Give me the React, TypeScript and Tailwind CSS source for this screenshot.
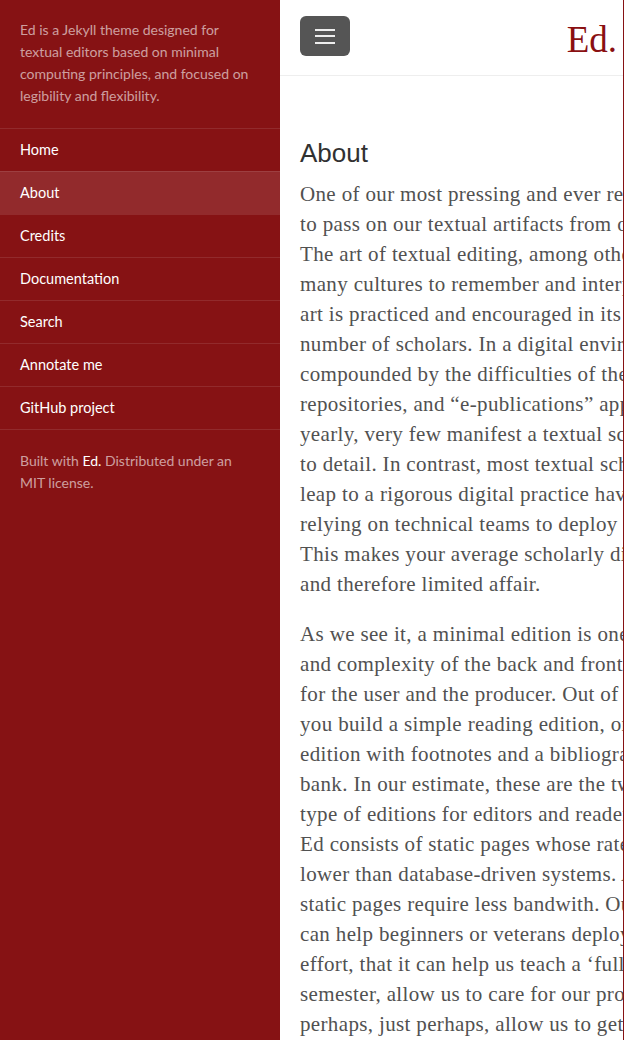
import React from 'react';

const navItems = ['Home', 'About', 'Credits', 'Documentation', 'Search', 'Annotate me', 'GitHub project'];

const paragraphs: string[][] = [
  [
    'One of our most pressing and ever returning challenges as scholars is',
    'to pass on our textual artifacts from one generation to the next.',
    'The art of textual editing, among other practices, has allowed',
    'many cultures to remember and interpret their textual heritage. This',
    'art is practiced and encouraged in its many forms by a dwindling',
    'number of scholars. In a digital environment, this shrinking is',
    'compounded by the difficulties of the medium. While online archives,',
    'repositories, and \u201ce-publications\u201d appear by the thousands',
    'yearly, very few manifest a textual scholar\u2019s rigor and attention',
    'to detail. In contrast, most textual scholars who have made the',
    'leap to a rigorous digital practice have done so in large projects',
    'relying on technical teams to deploy complex software stacks.',
    'This makes your average scholarly digital edition an expensive',
    'and therefore limited affair.',
  ],
  [
    'As we see it, a minimal edition is one that reduces the size',
    'and complexity of the back and front end as much as possible',
    'for the user and the producer. Out of the box, Ed. can help',
    'you build a simple reading edition, or a more complex scholarly',
    'edition with footnotes and a bibliography, and a good search',
    'bank. In our estimate, these are the two most commonly used',
    'type of editions for editors and readers of literary texts.',
    'Ed consists of static pages whose rate of obsolescence is much',
    'lower than database-driven systems. Additionally, minimal',
    'static pages require less bandwith. Our hope is that Ed.',
    'can help beginners or veterans deploy an edition with minimal',
    'effort, that it can help us teach a \u2018full stack\u2019 in one',
    'semester, allow us to care for our projects longer, and',
    'perhaps, just perhaps, allow us to get funding for more',
  ],
];

const Sidebar: React.FC = () => (
  <aside className="w-[280px] shrink-0 bg-[#861214] font-['Lato',sans-serif] text-[14px] leading-[22px]">
    <div className="px-5 pt-[19px] pb-[21px] text-white/60">
      Ed is a Jekyll theme designed for textual editors based on minimal computing principles, and focused on legibility and flexibility.
    </div>
    <nav className="border-b border-white/10">
      {navItems.map(item => (
        <div
          key={item}
          className={`border-t border-white/10 px-5 py-[10px] text-[14.5px] text-white ${item === 'About' ? 'bg-white/10' : ''}`}
        >
          {item}
        </div>
      ))}
    </nav>
    <div className="px-5 pt-5 text-white/60">
      Built with <span className="text-white">Ed.</span> Distributed under an MIT license.
    </div>
  </aside>
);

export default function App() {
  return (
    <div className="flex h-[1040px] w-[625px] overflow-hidden bg-white">
      <Sidebar />
      <main className="w-[344px] shrink-0 overflow-hidden border-r border-[#861214]">
        <header className="flex h-[76px] items-start justify-between border-b border-[#eeeeee] pl-5 pr-[6px] pt-4">
          <button className="flex h-10 w-[50px] flex-col items-center justify-center gap-[4.5px] rounded-md bg-[#555555]">
            <span className="h-[2px] w-5 bg-[#eeeeee]" />
            <span className="h-[2px] w-5 bg-[#eeeeee]" />
            <span className="h-[2px] w-5 bg-[#eeeeee]" />
          </button>
          <div className="pt-[2px] font-['Liberation_Serif',serif] text-[37px] leading-[44px] text-[#8a1012]">Ed.</div>
        </header>
        <article className="pl-5 pt-[61px]">
          <h1 className="mb-[10px] font-['Liberation_Sans',Arial,sans-serif] text-[26px] leading-[32px] text-[#313131]">About</h1>
          {paragraphs.map((lines, i) => (
            <p key={i} className="mb-5 font-['Liberation_Serif',serif] text-[21px] leading-[30px] tracking-[0.35px] text-[#515151]">
              {lines.map(line => (
                <span key={line} className="block whitespace-nowrap">{line}</span>
              ))}
            </p>
          ))}
        </article>
      </main>
    </div>
  );
}
